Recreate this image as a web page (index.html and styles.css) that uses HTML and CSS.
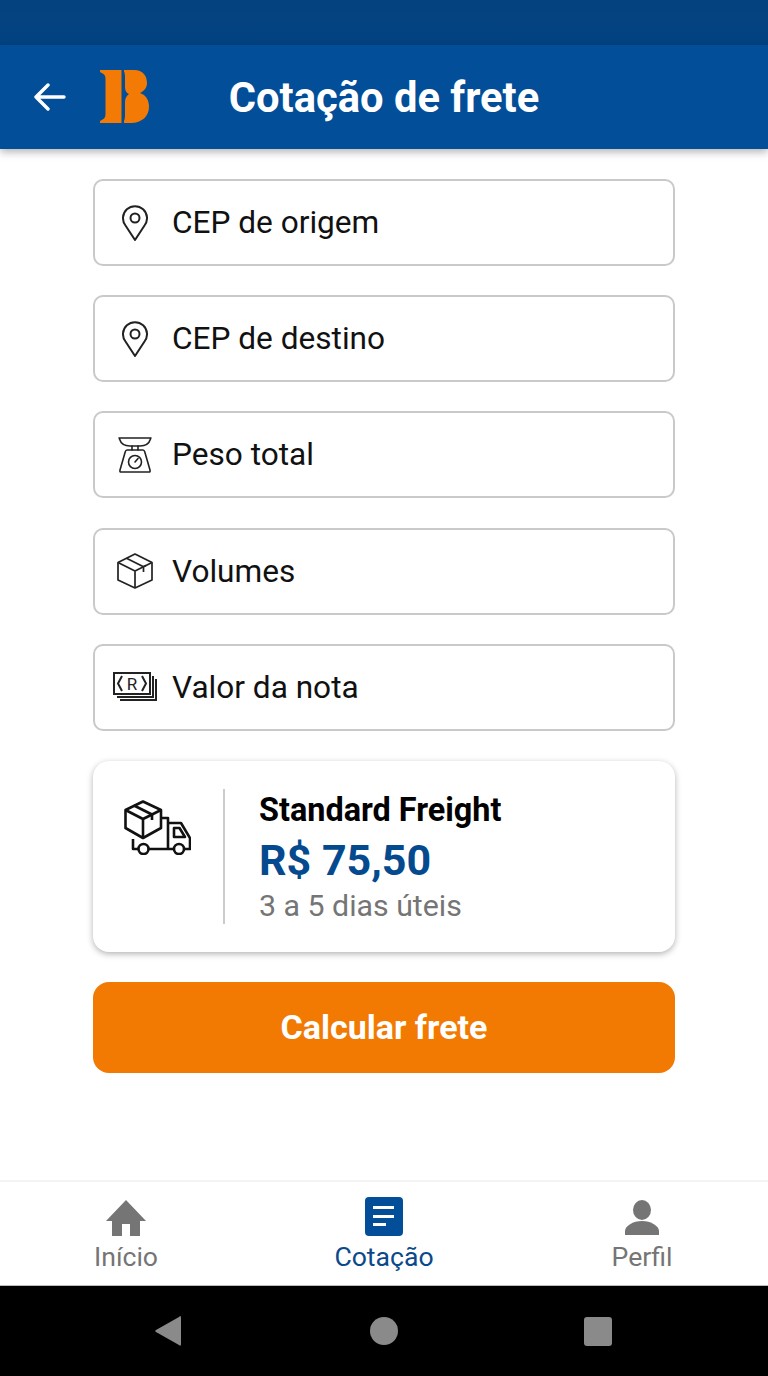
FILE: index.html
```html
<!DOCTYPE html>
<html lang="pt-BR">
<head>
    <meta charset="UTF-8">
    <meta name="viewport" content="width=device-width, initial-scale=1.0">
    <title>Cotação de frete</title>
    <link rel="stylesheet" href="styles.css">
</head>
<body>
    <div class="status-bar"></div>

    <header class="top-bar">
        <div class="top-left">
            <svg class="back-icon" viewBox="0 0 32 28" fill="none" stroke="#fff" stroke-width="3.4" stroke-linecap="round" stroke-linejoin="round">
                <path d="M14 2 L2 14 L14 26 M2 14 H30"/>
            </svg>
            <svg class="logo" viewBox="0 0 50 56" fill="#f27a05">
                <path d="M0 1 H21.5 V54 H0 V52 L2.5 50.5 C4.5 49.5 5.5 48 5.5 45 V10 C5.5 7 4.5 5.5 2.5 4.5 L0 3 Z"/>
                <path d="M24 1 H34 C43 1 47 7 47 14 C47 19 44 22 40 24 C46 26 49 31 49 38 C49 47 42 54 31 54 H24 V52 C24.5 51 25 49 25 46 V33 C25 30 26 27 29 25 C26 24 25 21 25 18 V8 C25 5 24.5 3 24 3 Z"/>
            </svg>
        </div>
        <h1 class="top-title">Cotação de frete</h1>
    </header>

    <main class="content">
        <div class="field">
            <span class="field-icon">
                <svg class="icon-pin" viewBox="0 0 26 36" fill="none" stroke="#222" stroke-width="2" stroke-linejoin="round">
                    <path d="M13 35 L3.5 20.5 A12 12 0 1 1 22.5 20.5 Z"/>
                    <circle cx="13" cy="13" r="4.5"/>
                </svg>
            </span>
            <span class="field-label">CEP de origem</span>
        </div>
        <div class="field">
            <span class="field-icon">
                <svg class="icon-pin" viewBox="0 0 26 36" fill="none" stroke="#222" stroke-width="2" stroke-linejoin="round">
                    <path d="M13 35 L3.5 20.5 A12 12 0 1 1 22.5 20.5 Z"/>
                    <circle cx="13" cy="13" r="4.5"/>
                </svg>
            </span>
            <span class="field-label">CEP de destino</span>
        </div>
        <div class="field">
            <span class="field-icon">
                <svg class="icon-scale" viewBox="0 0 34 36" fill="none" stroke="#222" stroke-width="1.6" stroke-linejoin="round" stroke-linecap="round">
                    <path d="M1 1 H33 M1.5 2 C3 7 7 9 12 9 H22 C27 9 31 7 32.5 2"/>
                    <path d="M14 9 V13 M20 9 V13"/>
                    <path d="M9 13 H25 C26 13 26.5 14 26.8 15 L32 33 C32.3 34.5 32 35 31 35 H3 C2 35 1.7 34.5 2 33 L7.2 15 C7.5 14 8 13 9 13 Z"/>
                    <circle cx="17" cy="25" r="6.5"/>
                    <path d="M17 25 L20 21.5"/>
                </svg>
            </span>
            <span class="field-label">Peso total</span>
        </div>
        <div class="field">
            <span class="field-icon">
                <svg class="icon-box" viewBox="0 0 36 36" fill="none" stroke="#222" stroke-width="1.7" stroke-linejoin="round">
                    <path d="M18 1 L35 9.5 V27 L18 35 L1 27 V9.5 Z"/>
                    <path d="M1 9.5 L18 18 L35 9.5 M18 18 V35"/>
                    <path d="M9.5 5.2 L26.5 13.7 V19 M26.5 13.7 L29 12.5"/>
                </svg>
            </span>
            <span class="field-label">Volumes</span>
        </div>
        <div class="field">
            <span class="field-icon">
                <svg class="icon-money" viewBox="0 0 44 30" fill="none" stroke="#222" stroke-width="2">
                    <rect x="1" y="1" width="36" height="21"/>
                    <path d="M40 4 V25 H4 M43 7 V28 H7"/>
                    <path d="M9 4 L5 11.5 L9 19 M29 4 L33 11.5 L29 19"/>
                    <text class="money-r" x="19" y="18" text-anchor="middle">R</text>
                </svg>
            </span>
            <span class="field-label">Valor da nota</span>
        </div>

        <section class="result-card">
            <svg class="icon-truck" viewBox="0 0 67 55" fill="none" stroke="#111" stroke-width="2.6" stroke-linejoin="round">
                <path d="M19 1.5 L37 10 V28 L19 38 L1.5 28 V10 Z"/>
                <path d="M1.5 10 L19 19 L37 10 M19 19 V38"/>
                <path d="M10 5.5 L28 14.5 V20"/>
                <path d="M37 18 H44 V49"/>
                <path d="M44 23 H57 L66 38 V49 H61"/>
                <path d="M50 28 H55.5 L61 37 H50 Z"/>
                <path d="M9 39 V49 H14 M25 49 H49"/>
                <circle cx="19.5" cy="49" r="5"/>
                <circle cx="55" cy="49" r="5"/>
            </svg>
            <div class="result-divider"></div>
            <div class="result-info">
                <div class="result-name">Standard Freight</div>
                <div class="result-price">R$ 75,50</div>
                <div class="result-days">3 a 5 dias úteis</div>
            </div>
        </section>

        <button class="calc-btn">Calcular frete</button>
    </main>

    <nav class="bottom-nav">
        <div class="nav-item">
            <svg class="nav-icon" width="42" height="36" viewBox="0 0 42 36" fill="#757575">
                <path d="M21 0 L41 21 H35 V36 H25 V24 H17 V36 H7 V21 H1 Z"/>
            </svg>
            <span>Início</span>
        </div>
        <div class="nav-item active">
            <svg class="nav-icon" width="38" height="39" viewBox="0 0 38 39">
                <rect width="38" height="39" rx="4" fill="#034e98"/>
                <path d="M8 9 H29 V12 H8 Z M8 18 H29 V21 H8 Z M8 26 H21 V29 H8 Z" fill="#fff"/>
            </svg>
            <span>Cotação</span>
        </div>
        <div class="nav-item">
            <svg class="nav-icon" width="34" height="36" viewBox="0 0 34 36" fill="#757575">
                <ellipse cx="17" cy="10" rx="9" ry="10"/>
                <path d="M0 35 V31 C0 26 8 21 17 21 C26 21 34 26 34 31 V35 Z"/>
            </svg>
            <span>Perfil</span>
        </div>
    </nav>

    <div class="system-bar">
        <svg class="sys-back" width="26" height="30" viewBox="0 0 26 30" fill="#8a8a8a"><path d="M25 0 C26 0 26 1 26 2 V28 C26 30 25 30 24 29 L1 16 C0 15 0 15 1 14 L24 1 Z"/></svg>
        <div class="sys-circle"></div>
        <div class="sys-square"></div>
    </div>
</body>
</html>
```

FILE: styles.css
```css
* {
    box-sizing: border-box;
}

body {
    font-family: Roboto, "Liberation Sans", sans-serif;
    background-color: #ffffff;
    margin: 0;
    padding: 0;
    display: flex;
    flex-direction: column;
    height: 1376px;
    overflow: hidden;
}

.status-bar {
    height: 45px;
    background: linear-gradient(#04427f, #034281);
}

/* Header */
.top-bar {
    height: 104px;
    background-color: #034e98;
    box-shadow: 0 3px 8px rgba(0, 0, 0, 0.3);
    display: grid;
    grid-template-columns: 1fr auto 1fr;
    align-items: center;
    position: relative;
}

.top-left {
    display: flex;
    align-items: center;
    padding-left: 34px;
    gap: 34px;
}

.back-icon {
    width: 32px;
    height: 28px;
}

.logo {
    width: 50px;
    height: 56px;
}

.top-title {
    margin: 0;
    color: #ffffff;
    font-size: 41.7px;
    font-weight: 700;
}

/* Form */
.content {
    flex: 1;
    display: flex;
    flex-direction: column;
    width: 582px;
    margin: 0 auto;
    padding-top: 30px;
}

.field {
    height: 87px;
    border: 2px solid #c9c9c9;
    border-radius: 10px;
    display: flex;
    align-items: center;
    margin-bottom: 29.2px;
    background: #ffffff;
}

.field-icon {
    width: 77px;
    padding-left: 2px;
    display: flex;
    justify-content: center;
    flex-shrink: 0;
}

.field-label {
    font-size: 31.6px;
    color: #111111;
}

.icon-pin { width: 26px; height: 36px; }
.icon-scale { width: 34px; height: 36px; }
.icon-box { width: 36px; height: 36px; }
.icon-money { width: 44px; height: 30px; }

.money-r {
    font-family: Roboto, sans-serif;
    font-size: 17px;
    fill: #222222;
    stroke: none;
}

/* Result card */
.result-card {
    height: 191px;
    margin-top: 1px;
    border-radius: 16px;
    background: #ffffff;
    box-shadow: 0 2px 6px rgba(0, 0, 0, 0.3);
    display: flex;
    align-items: flex-start;
    padding: 28px 0 0 31px;
}

.icon-truck {
    width: 67px;
    height: 55px;
    margin-top: 11px;
    flex-shrink: 0;
}

.result-divider {
    width: 2px;
    height: 135px;
    background-color: #cccccc;
    margin: 0 34px 0 32px;
}

.result-name {
    font-size: 32.4px;
    font-weight: 700;
    color: #000000;
    line-height: 42px;
}

.result-price {
    font-size: 43px;
    font-weight: 700;
    color: #054a8e;
    line-height: 54px;
    margin-top: 2px;
}

.result-days {
    font-size: 30.3px;
    color: #757575;
    line-height: 38px;
}

.calc-btn {
    height: 91px;
    margin-top: 30px;
    border: none;
    border-radius: 16px;
    background-color: #f27a02;
    color: #ffffff;
    font-family: inherit;
    font-size: 34px;
    font-weight: 700;
}

/* Bottom nav */
.bottom-nav {
    height: 106px;
    border-top: 2px solid #f3f3f3;
    border-bottom: 1px solid #bbbbbb;
    display: grid;
    grid-template-columns: 258px 258px 258px;
    justify-content: center;
    background: #ffffff;
}

.nav-item {
    display: flex;
    flex-direction: column;
    align-items: center;
    justify-content: flex-end;
    padding-bottom: 13px;
    color: #757575;
    font-size: 26.6px;
}

.nav-item.active {
    color: #0a4a8a;
}

.nav-icon {
    margin-bottom: 5px;
}

.system-bar {
    height: 90px;
    background-color: #000000;
    display: grid;
    grid-template-columns: 214px 214px 214px;
    justify-content: center;
    justify-items: center;
    align-items: center;
}

.sys-back {
    margin-right: 4px;
}

.sys-circle {
    width: 28px;
    height: 28px;
    border-radius: 50%;
    background-color: #8a8a8a;
}

.sys-square {
    width: 28px;
    height: 29px;
    border-radius: 3px;
    background-color: #8a8a8a;
}
```
